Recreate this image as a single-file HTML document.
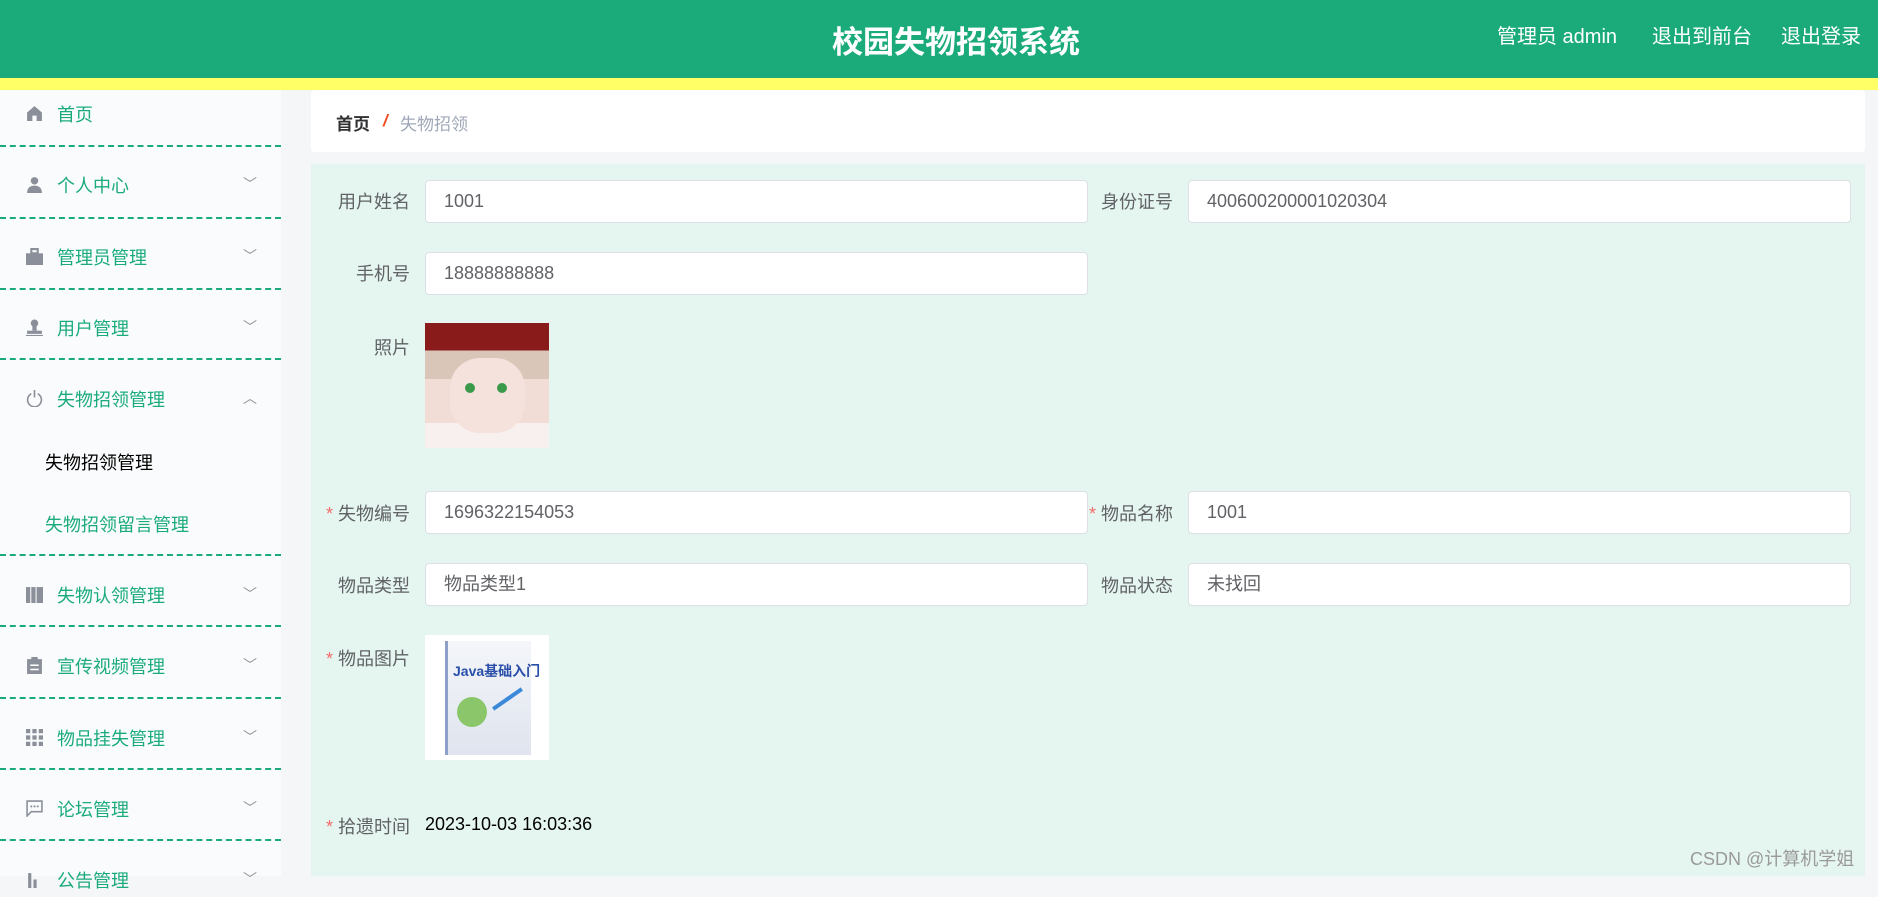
<!DOCTYPE html>
<html><head><meta charset="utf-8"><style>
*{margin:0;padding:0;box-sizing:border-box}
body{width:1878px;height:876px;overflow:hidden;background:#f4f6f8;font-family:"Liberation Sans","Noto Sans CJK SC",sans-serif;position:relative}
.hdr{position:absolute;left:0;top:0;width:1878px;height:78px;background:#1bab7b}
.yl{position:absolute;left:0;top:78px;width:1878px;height:12px;background:#ffff66}
.title{position:absolute;left:0;width:1912px;top:17px;text-align:center;color:#fff;font-size:31px;font-weight:bold}
.hr{position:absolute;top:20px;color:#fff;font-size:20px}
.side{position:absolute;left:0;top:90px;width:281px;height:786px;background:#fafbfc}
.mi{position:absolute;left:0;width:281px;height:30px;color:#1bab7b;font-size:18px}
.mi .t{position:absolute;left:57px;top:0}
.mi .ic{position:absolute;left:26px;top:4px;width:17px;height:17px}
.mi .ch{position:absolute;left:243px;top:2px;color:#909399;font-size:14px}
.dl{position:absolute;left:0;width:281px;border-top:2px dashed #1bab7b}
.sub{position:absolute;left:45px;font-size:18px}
.bc{position:absolute;left:311px;top:90px;width:1554px;height:62px;background:#fff;border-radius:4px}
.panel{position:absolute;left:311px;top:164px;width:1554px;height:712px;background:#e5f5ef}
.lb{position:absolute;font-size:18px;color:#606266;text-align:right;width:150px}
.in{position:absolute;height:43px;background:#fff;border:1px solid #dcdfe6;border-radius:4px;font-size:18px;color:#606266;padding-left:18px;line-height:41px}
.st{color:#f56c6c;margin-right:5px}
</style></head><body>
<div class="hdr"></div><div class="yl"></div>
<div class="title">校园失物招领系统</div>
<div class="hr" style="left:1497px">管理员 admin</div>
<div class="hr" style="left:1652px">退出到前台</div>
<div class="hr" style="left:1781px">退出登录</div>

<div class="side"></div>
<div class="mi" style="top:101px"><svg class="ic" viewBox="0 0 16 16"><path d="M8 1L1 7v8h5v-5h4v5h5V7z" fill="#8a8f99"/></svg><span class="t">首页</span></div>
<div class="dl" style="top:145px"></div>
<div class="mi" style="top:172px"><svg class="ic" viewBox="0 0 16 16"><circle cx="8" cy="4.5" r="3.5" fill="#8a8f99"/><path d="M1 16c0-5 3-7 7-7s7 2 7 7z" fill="#8a8f99"/></svg><span class="t">个人中心</span><span class="ch">﹀</span></div>
<div class="dl" style="top:217px"></div>
<div class="mi" style="top:244px"><svg class="ic" viewBox="0 0 16 16"><rect x="5" y="1" width="6" height="4" fill="none" stroke="#8a8f99" stroke-width="2"/><rect x="0" y="5" width="16" height="11" fill="#8a8f99"/></svg><span class="t">管理员管理</span><span class="ch">﹀</span></div>
<div class="dl" style="top:288px"></div>
<div class="mi" style="top:315px"><svg class="ic" viewBox="0 0 16 16"><circle cx="8" cy="4" r="3.5" fill="#8a8f99"/><rect x="6" y="7" width="4" height="4" fill="#8a8f99"/><rect x="1" y="11" width="14" height="3" fill="#8a8f99"/><rect x="0" y="15" width="16" height="1" fill="#8a8f99"/></svg><span class="t">用户管理</span><span class="ch">﹀</span></div>
<div class="dl" style="top:358px"></div>
<div class="mi" style="top:386px"><svg class="ic" viewBox="0 0 16 16"><path d="M5 3.5A6.5 6.5 0 1 0 11 3.5" fill="none" stroke="#8a8f99" stroke-width="1.5"/><path d="M8 0v7" stroke="#8a8f99" stroke-width="1.5"/></svg><span class="t">失物招领管理</span><span class="ch">︿</span></div>
<div class="sub" style="top:449px;color:#000">失物招领管理</div>
<div class="sub" style="top:511px;color:#1bab7b">失物招领留言管理</div>
<div class="dl" style="top:554px"></div>
<div class="mi" style="top:582px"><svg class="ic" viewBox="0 0 16 16"><rect x="0" y="1" width="4" height="15" fill="#8a8f99"/><rect x="5" y="1" width="4" height="15" fill="#8a8f99"/><path d="M10 1h6v15h-6z" fill="#8a8f99"/></svg><span class="t">失物认领管理</span><span class="ch">﹀</span></div>
<div class="dl" style="top:625px"></div>
<div class="mi" style="top:653px"><svg class="ic" viewBox="0 0 16 16"><rect x="1" y="2" width="14" height="14" fill="#8a8f99"/><rect x="5" y="0" width="6" height="3" fill="#8a8f99"/><rect x="4" y="7" width="8" height="1.5" fill="#fff"/><rect x="4" y="11" width="8" height="1.5" fill="#fff"/></svg><span class="t">宣传视频管理</span><span class="ch">﹀</span></div>
<div class="dl" style="top:697px"></div>
<div class="mi" style="top:725px"><svg class="ic" viewBox="0 0 16 16"><g fill="#8a8f99"><rect x="0" y="0" width="4" height="4"/><rect x="6" y="0" width="4" height="4"/><rect x="12" y="0" width="4" height="4"/><rect x="0" y="6" width="4" height="4"/><rect x="6" y="6" width="4" height="4"/><rect x="12" y="6" width="4" height="4"/><rect x="0" y="12" width="4" height="4"/><rect x="6" y="12" width="4" height="4"/><rect x="12" y="12" width="4" height="4"/></g></svg><span class="t">物品挂失管理</span><span class="ch">﹀</span></div>
<div class="dl" style="top:768px"></div>
<div class="mi" style="top:796px"><svg class="ic" viewBox="0 0 16 16"><path d="M1 1h14v10H5l-4 4z" fill="none" stroke="#8a8f99" stroke-width="1.5"/><circle cx="5" cy="6" r="1" fill="#8a8f99"/><circle cx="8" cy="6" r="1" fill="#8a8f99"/><circle cx="11" cy="6" r="1" fill="#8a8f99"/></svg><span class="t">论坛管理</span><span class="ch">﹀</span></div>
<div class="dl" style="top:839px"></div>
<div class="mi" style="top:867px"><svg class="ic" viewBox="0 0 16 16"><rect x="2" y="2" width="3" height="14" fill="#8a8f99"/><rect x="7" y="8" width="3" height="8" fill="#8a8f99"/></svg><span class="t">公告管理</span><span class="ch">﹀</span></div>

<div class="bc"><span style="position:absolute;left:25px;top:20px;font-size:17px;font-weight:bold;color:#303133">首页</span><span style="position:absolute;left:72px;top:21px;font-size:17px;color:#f04a1e;font-weight:bold;font-style:italic">/</span><span style="position:absolute;left:89px;top:20px;font-size:17px;color:#a0a8b8">失物招领</span></div>
<div class="panel"></div>

<div class="lb" style="left:260px;top:188px">用户姓名</div>
<div class="in" style="left:425px;top:180px;width:663px">1001</div>
<div class="lb" style="left:1023px;top:188px">身份证号</div>
<div class="in" style="left:1188px;top:180px;width:663px">400600200001020304</div>
<div class="lb" style="left:260px;top:260px">手机号</div>
<div class="in" style="left:425px;top:252px;width:663px">18888888888</div>
<div class="lb" style="left:260px;top:334px">照片</div>
<div style="position:absolute;left:425px;top:323px;width:124px;height:125px;background:linear-gradient(180deg,#8a1b1b 0 22%,#d9c6b8 22% 45%,#f2dcd6 45% 80%,#f8f0ee 80%)">
<div style="position:absolute;left:25px;top:35px;width:75px;height:75px;border-radius:40%;background:#f5e2dc"></div>
<div style="position:absolute;left:40px;top:60px;width:10px;height:10px;border-radius:50%;background:#3a9a4a"></div>
<div style="position:absolute;left:72px;top:60px;width:10px;height:10px;border-radius:50%;background:#3a9a4a"></div></div>
<div class="lb" style="left:260px;top:500px"><span class="st">*</span>失物编号</div>
<div class="in" style="left:425px;top:491px;width:663px">1696322154053</div>
<div class="lb" style="left:1023px;top:500px"><span class="st">*</span>物品名称</div>
<div class="in" style="left:1188px;top:491px;width:663px">1001</div>
<div class="lb" style="left:260px;top:572px">物品类型</div>
<div class="in" style="left:425px;top:563px;width:663px">物品类型1</div>
<div class="lb" style="left:1023px;top:572px">物品状态</div>
<div class="in" style="left:1188px;top:563px;width:663px">未找回</div>
<div class="lb" style="left:260px;top:645px"><span class="st">*</span>物品图片</div>
<div style="position:absolute;left:425px;top:635px;width:124px;height:125px;background:#fff">
<div style="position:absolute;left:20px;top:6px;width:86px;height:114px;background:linear-gradient(180deg,#f4f6fa,#dfe4ee);border-left:3px solid #8fa0c8"></div>
<div style="position:absolute;left:28px;top:26px;font-size:14px;font-weight:bold;color:#2a4fa8">Java基础入门</div>
<div style="position:absolute;left:32px;top:62px;width:30px;height:30px;border-radius:50%;background:#8cc66a"></div>
<div style="position:absolute;left:65px;top:62px;width:35px;height:4px;background:#3b8ad9;transform:rotate(-35deg)"></div></div>
<div class="lb" style="left:260px;top:813px"><span class="st">*</span>拾遗时间</div>
<div style="position:absolute;left:425px;top:814px;font-size:18px;color:#000">2023-10-03 16:03:36</div>

<div style="position:absolute;left:1690px;top:845px;font-size:18px;color:#9a9a9a">CSDN @计算机学姐</div>
</body></html>
